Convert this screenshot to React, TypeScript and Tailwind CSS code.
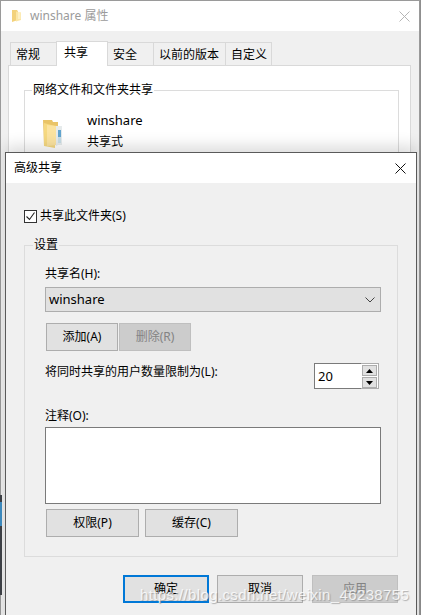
import React from 'react';

const uiFont = 'font-["Noto_Sans","Noto_Sans_CJK_SC",sans-serif]';

function SmallFolder() {
  return (
    <svg width="11" height="14" viewBox="0 0 11 14" className="shrink-0">
      <path d="M1 1h5l1 1.5V11l-6 2z" fill="#f3d27c" />
      <path d="M5 2.5l5 1V11l-5 1.5z" fill="#fbe6a6" />
      <path d="M7 3h2.5v7H7z" fill="#fdf0c4" />
    </svg>
  );
}

function LargeFolder() {
  return (
    <svg width="22" height="30" viewBox="0 0 22 30">
      <path d="M1 1h9l1 2h5v21H7l-5 3z" fill="#e9c468" />
      <path d="M2 27l0-23 11 3v22z" fill="#f6d981" />
      <path d="M5 27V6l10 1v19z" fill="#fbe3a0" />
      <path d="M14 7h6v19h-4l-2 1z" fill="#e6ebec" />
      <path d="M16 11h3v7h-3z" fill="#62a5cf" />
      <path d="M16 18h3v6h-3z" fill="#c7dde6" />
    </svg>
  );
}

function Tab({ label, active, className }: { label: string; active?: boolean; className: string }) {
  if (active) {
    return (
      <div className={`relative z-10 -mb-px h-[25px] bg-white border border-b-0 border-[#d9d9d9] text-[12px] text-black pl-[7px] pt-[2px] leading-[18px] ${className}`}>
        {label}
      </div>
    );
  }
  return (
    <div className={`mt-[2px] h-[23px] bg-[#f0f0f0] border border-b-0 border-[#d9d9d9] text-[12px] text-black pl-[5px] pt-[3px] leading-[18px] ${className}`}>
      {label}
    </div>
  );
}

function Button({ label, disabled, focused, className }: { label: string; disabled?: boolean; focused?: boolean; className: string }) {
  let look = 'bg-[#e1e1e1] border border-[#adadad] text-black';
  if (disabled) look = 'bg-[#cccccc] border border-[#bfbfbf] text-[#838383]';
  if (focused) look = 'bg-[#e1e1e1] border-2 border-[#0078d7] text-black';
  return (
    <div className={`h-[28px] flex items-center justify-center text-[12px] leading-none ${look} ${className}`}>
      {label}
    </div>
  );
}

function SpinButton({ up }: { up?: boolean }) {
  return (
    <div className="w-[15px] h-[11px] bg-[#e1e1e1] border border-[#adadad] flex items-center justify-center">
      <svg width="7" height="4" viewBox="0 0 7 4">
        <path d={up ? 'M3.5 0L7 4H0z' : 'M0 0h7L3.5 4z'} fill="#000" />
      </svg>
    </div>
  );
}

export default function App() {
  return (
    <div className={`relative w-[421px] h-[615px] overflow-hidden bg-[#8f8f8f] ${uiFont}`}>
      {/* properties window behind */}
      <div className="w-[420px] h-full bg-[#f0f0f0] border-t border-l border-r border-[#9a9a9a]">
        <div className="h-[30px] bg-white flex items-center pl-[10px] pr-[9px]">
          <SmallFolder />
          <span className="ml-[8px] text-[12px] text-[#9b9b9b]">winshare 属性</span>
          <svg width="11" height="11" viewBox="0 0 11 11" className="ml-auto">
            <path d="M0.5 0.5l10 10M10.5 0.5l-10 10" stroke="#b5b5b5" fill="none" />
          </svg>
        </div>
        <div className="pt-[9px] pl-[7px] pr-[8px]">
          <div className="flex pl-[2px] items-end">
            <Tab label="常规" className="w-[47px] -mr-px" />
            <Tab label="共享" active className="w-[52px]" />
            <Tab label="安全" className="w-[47px] -ml-px" />
            <Tab label="以前的版本" className="w-[73px] -ml-px" />
            <Tab label="自定义" className="w-[47px] -ml-px" />
          </div>
          <div className="h-[500px] bg-white border border-[#d9d9d9] pt-[24px] pl-[15px] pr-[11px]">
            <div className="relative h-[200px] border border-[#dcdcdc] pl-[62px] pt-[19px]">
              <span className="absolute left-[7px] -top-[10px] bg-white px-[1px] text-[12px] leading-[18px] text-black">网络文件和文件夹共享</span>
              <div className="absolute left-[17px] top-[28px]">
                <LargeFolder />
              </div>
              <div className="text-[13px] leading-[20px] text-black">winshare</div>
              <div className="mt-[2px] text-[12px] leading-[20px] text-black">共享式</div>
            </div>
          </div>
        </div>
      </div>

      {/* desktop showing past the left edge */}
      <div className="absolute left-0 top-[495px] w-[2px] h-[100px] bg-[#3f4248]">
        <div className="mt-[7px] h-[24px] bg-[#3f8fc4]" />
      </div>

      {/* advanced sharing dialog */}
      <div className="absolute left-[5px] top-[152px] w-[412px] h-[480px] bg-[#f0f0f0] border border-[#5a5a5a] shadow-[0_-6px_14px_rgba(0,0,0,0.14)]">
        <div className="h-[30px] bg-white flex items-center pl-[8px] pr-[10px]">
          <span className="text-[12px] text-black">高级共享</span>
          <svg width="11" height="11" viewBox="0 0 11 11" className="ml-auto">
            <path d="M0.5 0.5l10 10M10.5 0.5l-10 10" stroke="#111" fill="none" />
          </svg>
        </div>
        <div className="pl-[18px] pr-[18px]">
          <div className="mt-[26px] flex items-center h-[14px]">
            <div className="w-[13px] h-[13px] bg-white border border-[#333] flex items-center justify-center">
              <svg width="11" height="11" viewBox="0 0 11 11">
                <path d="M1.5 5.5l3 3 5-7" stroke="#222" strokeWidth="1.1" fill="none" />
              </svg>
            </div>
            <span className="ml-[3px] text-[12px] text-black">共享此文件夹(S)</span>
          </div>

          <div className="relative mt-[22px] h-[312px] border border-[#dcdcdc] pl-[20px] pr-[16px]">
            <span className="absolute left-[8px] -top-[10px] bg-[#f0f0f0] px-[1px] text-[12px] leading-[18px] text-black">设置</span>
            <div className="mt-[19px] text-[12px] leading-[18px] text-black">共享名(H):</div>
            <div className="mt-[4px] h-[25px] bg-[#e1e1e1] border border-[#adadad] flex items-center pl-[3px] pr-[5px]">
              <span className="text-[13px] leading-[23px] text-black">winshare</span>
              <svg width="10" height="6" viewBox="0 0 10 6" className="ml-auto">
                <path d="M0.5 0.5L5 5l4.5-4.5" stroke="#444" fill="none" />
              </svg>
            </div>
            <div className="mt-[11px] flex pl-[1px]">
              <Button label="添加(A)" className="w-[72px]" />
              <Button label="删除(R)" disabled className="w-[72px] ml-px" />
            </div>
            <div className="mt-[12px] flex items-start">
              <span className="text-[12px] leading-[18px] text-black">将同时共享的用户数量限制为(L):</span>
              <div className="ml-auto mr-[2px] flex h-[26px] w-[65px]">
                <div className="w-[47px] bg-white border border-r-0 border-[#7a7a7a] pl-[3px] text-[13px] leading-[24px] text-black">20</div>
                <div className="w-[18px] bg-white border border-l-0 border-[#adadad] pl-px pt-px flex flex-col gap-px">
                  <SpinButton up />
                  <SpinButton />
                </div>
              </div>
            </div>
            <div className="mt-[18px] text-[12px] leading-[18px] text-black">注释(O):</div>
            <div className="mt-[2px] h-[77px] bg-white border border-[#7a7a7a]" />
            <div className="mt-[5px] flex pl-[1px] gap-[6px]">
              <Button label="权限(P)" className="w-[93px]" />
              <Button label="缓存(C)" className="w-[93px]" />
            </div>
          </div>

          <div className="mt-[18px] flex justify-end gap-[8px]">
            <Button label="确定" focused className="w-[86px]" />
            <Button label="取消" className="w-[86px]" />
            <Button label="应用" disabled className="w-[86px] ml-px" />
          </div>
        </div>
      </div>

      {/* watermark */}
      <div className="absolute left-[140px] top-[585px] text-[15px] leading-[20px] tracking-[0.38px] text-white/80 font-['Liberation_Sans',sans-serif] whitespace-nowrap [text-shadow:1px_1px_1px_rgba(120,120,120,0.55)]">
        https://blog.csdn.net/weixin_46238755
      </div>
    </div>
  );
}
